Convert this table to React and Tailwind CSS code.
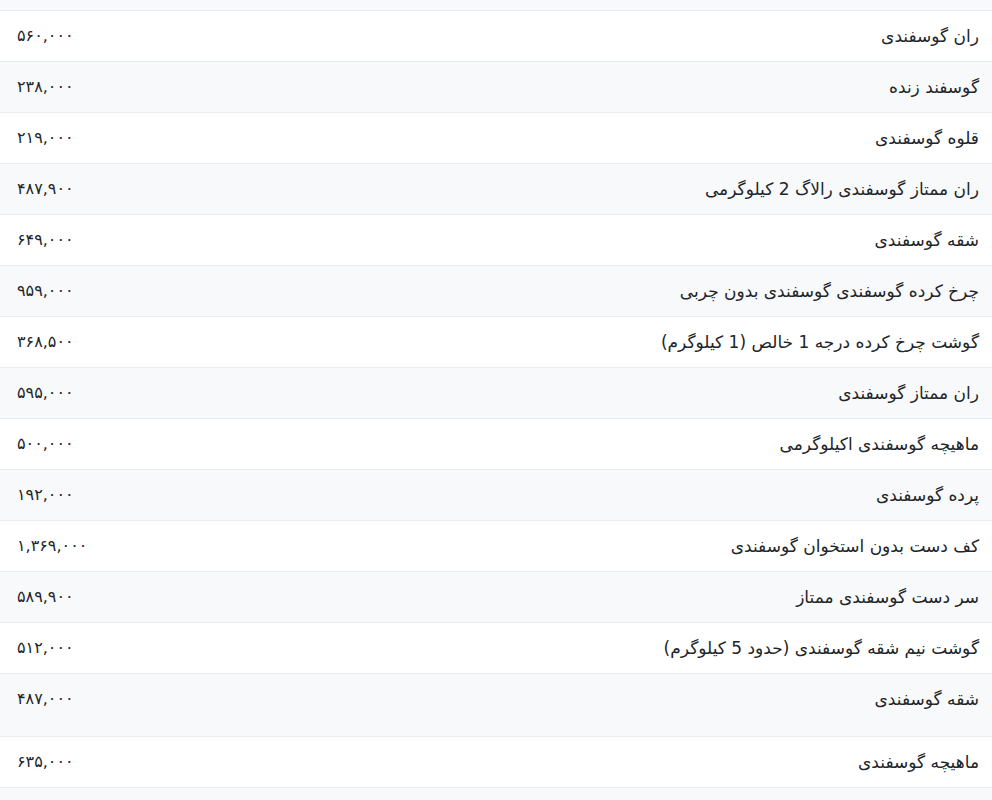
import React from 'react'

// Price list rows (name, price)
const rows = [
  { name: 'ران گوسفندی', price: '۵۶۰,۰۰۰' },
  { name: 'گوسفند زنده', price: '۲۳۸,۰۰۰' },
  { name: 'قلوه گوسفندی', price: '۲۱۹,۰۰۰' },
  { name: 'ران ممتاز گوسفندی رالاگ 2 کیلوگرمی', price: '۴۸۷,۹۰۰' },
  { name: 'شقه گوسفندی', price: '۶۴۹,۰۰۰' },
  { name: 'چرخ کرده گوسفندی گوسفندی بدون چربی', price: '۹۵۹,۰۰۰' },
  { name: 'گوشت چرخ کرده درجه 1 خالص (1 کیلوگرم)', price: '۳۶۸,۵۰۰' },
  { name: 'ران ممتاز گوسفندی', price: '۵۹۵,۰۰۰' },
  { name: 'ماهیچه گوسفندی اکیلوگرمی', price: '۵۰۰,۰۰۰' },
  { name: 'پرده گوسفندی', price: '۱۹۲,۰۰۰' },
  { name: 'کف دست بدون استخوان گوسفندی', price: '۱,۳۶۹,۰۰۰' },
  { name: 'سر دست گوسفندی ممتاز', price: '۵۸۹,۹۰۰' },
  { name: 'گوشت نیم شقه گوسفندی (حدود 5 کیلوگرم)', price: '۵۱۲,۰۰۰' },
  { name: 'شقه گوسفندی', price: '۴۸۷,۰۰۰', tall: true },
  { name: 'ماهیچه گوسفندی', price: '۶۳۵,۰۰۰' },
  { name: '', price: '' },
]

const App = () => {
  return (
    <div className="min-h-screen bg-white text-[#212529] text-[17px]" style={{ fontFamily: '"DejaVu Sans", sans-serif' }}>
      <div className="h-[10px] bg-[#f8f9fa]"></div>
      <div dir="rtl">
        {rows.map((row, i) => (
          <div
            key={i}
            className={`flex justify-between items-start border-t border-[#e9ecef] pl-[17px] pr-[13px] pt-[12px] ${
              row.tall ? 'h-[63px]' : 'h-[51px]'
            } ${i % 2 === 0 ? 'bg-white' : 'bg-[#f8f9fa]'}`}
          >
            <span className="leading-[26px]">{row.name}</span>
            <span className="leading-[26px] text-[16px]">{row.price}</span>
          </div>
        ))}
      </div>
    </div>
  )
}

export default App
